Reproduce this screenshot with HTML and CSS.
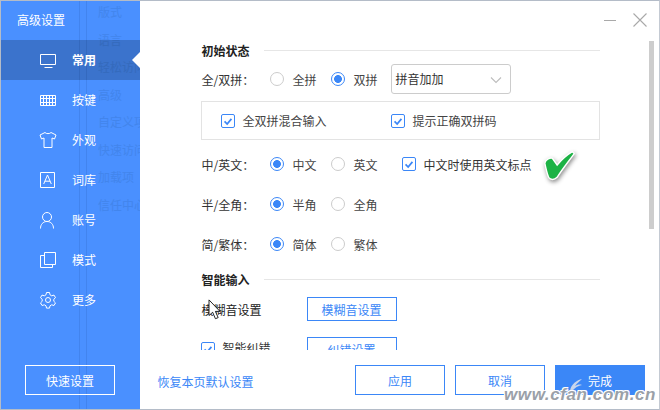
FILE: index.html
```html
<!DOCTYPE html>
<html lang="zh-CN">
<head>
<meta charset="utf-8">
<title>高级设置</title>
<link rel="stylesheet" href="styles.css">
</head>
<body>
<div class="window">
  <aside class="sidebar">
    <div class="ghost">
      <i class="ghost-line l1"></i><i class="ghost-line l2"></i>
      <span>版式</span><span>语言</span><span>轻松访问</span><span>高级</span><span>自定义项</span><span>快速访问</span><span>加载项</span><span>信任中心</span>
    </div>
    <div class="side-title">高级设置</div>
    <nav class="nav">
      <div class="nav-item active">
        <svg class="ico" viewBox="0 0 18 18"><path d="M1.500 3.500h15v10h-15zM5.500 16.500h8"/></svg><b>常用</b>
      </div>
      <div class="nav-item">
        <svg class="ico" viewBox="0 0 18 18"><path d="M1.500 4.500h15v10h-15zM1.500 7.500h15M1.500 11.500h15M4.500 4.500v10M7.500 4.500v10M10.500 4.500v10M13.500 4.500v10"/></svg><span>按键</span>
      </div>
      <div class="nav-item">
        <svg class="ico" viewBox="0 0 18 18"><path d="M6 1.500c1 1.500 5 1.500 6 0l5 2.500-1.500 4-2.500-1v9.500h-8v-9.500l-2.500 1-1.500-4z"/></svg><span>外观</span>
      </div>
      <div class="nav-item">
        <svg class="ico" viewBox="0 0 18 18"><path d="M1.500 1.500h14v15h-14zM4.700 13l3.800-9 3.800 9M5.900 10.200h5.200"/></svg><span>词库</span>
      </div>
      <div class="nav-item">
        <svg class="ico" viewBox="0 0 18 18"><circle cx="8" cy="6" r="4.500"/><path d="M1.500 17.500c0-4 2.500-7 6.500-7s6.500 3 6.500 7"/></svg><span>账号</span>
      </div>
      <div class="nav-item">
        <svg class="ico" viewBox="0 0 18 18"><path d="M5.500 1.500h11v12h-11zM5.500 4.500h-4v12h12v-3"/></svg><span>模式</span>
      </div>
      <div class="nav-item">
        <svg class="ico" viewBox="0 0 18 18"><circle cx="9" cy="9" r="2.500"/><path d="M7.500 1.500h3l.5 2.300 1.700 1 2.300-.7 1.500 2.600-1.700 1.600v2l1.700 1.600-1.500 2.600-2.300-.7-1.700 1-.5 2.300h-3l-.5-2.300-1.700-1-2.300.7-1.500-2.600 1.700-1.600v-2l-1.700-1.600 1.500-2.600 2.300.7 1.700-1z"/></svg><span>更多</span>
      </div>
    </nav>
    <button class="quick">快速设置</button>
  </aside>

  <main class="main">
    <div class="win-ctrl">
      <svg class="ctrl-ico" viewBox="0 0 50 16"><path d="M0 7.500h12M29.500 .5l13 13M42.500 .5l-13 13"/></svg>
    </div>
    <div class="content">
      <div class="scroll">
        <section class="sec-head first"><strong>初始状态</strong><i></i></section>

        <div class="row r-first">
          <label class="lab">全/双拼：</label>
          <span class="radio"></span><span class="opt">全拼</span>
          <span class="radio on"></span><span class="opt">双拼</span>
          <div class="select">拼音加加<svg class="chev" viewBox="0 0 12 8"><path d="M1 1.500l5 5 5-5"/></svg></div>
        </div>

        <div class="box">
          <span class="check"><svg viewBox="0 0 14 14"><path d="M3 7.500l3 3 5-6"/></svg></span><span class="box-a">全双拼混合输入</span>
          <span class="check"><svg viewBox="0 0 14 14"><path d="M3 7.500l3 3 5-6"/></svg></span><span>提示正确双拼码</span>
        </div>

        <div class="row r-cn">
          <label class="lab">中/英文：</label>
          <span class="radio on"></span><span class="opt">中文</span>
          <span class="radio"></span><span class="opt">英文</span>
          <span class="check c-punct"><svg viewBox="0 0 14 14"><path d="M3 7.500l3 3 5-6"/></svg></span><span>中文时使用英文标点</span>
        </div>
        <div class="row r-next">
          <label class="lab">半/全角：</label>
          <span class="radio on"></span><span class="opt">半角</span>
          <span class="radio"></span><span class="opt">全角</span>
        </div>
        <div class="row r-next">
          <label class="lab">简/繁体：</label>
          <span class="radio on"></span><span class="opt">简体</span>
          <span class="radio"></span><span class="opt">繁体</span>
        </div>

        <section class="sec-head second"><strong>智能输入</strong><i></i></section>

        <div class="row r-fuzzy">
          <span class="plain">模糊音设置</span><button class="ghost-btn">模糊音设置</button>
        </div>
        <div class="row r-smart">
          <span class="check c-smart"><svg viewBox="0 0 14 14"><path d="M3 7.500l3 3 5-6"/></svg></span><span class="smart-t">智能纠错</span><button class="ghost-btn">纠错设置</button>
        </div>
      </div>
      <div class="scrollbar"><i></i></div>
    </div>
    <footer class="foot">
      <a class="reset">恢复本页默认设置</a>
      <div class="foot-btns">
        <button class="btn">应用</button>
        <button class="btn">取消</button>
        <button class="btn primary">完成</button>
      </div>
    </footer>
  </main>

  <svg class="tick" viewBox="0 0 40 34"><path d="M4 15C5 11 10 9 12 10L17 17C22 11 28 6 33 3L35 5C30 12 22 22 17 30C14 33 10 33 8 30C6 25 5 20 4 15z"/></svg>
  <svg class="cursor" viewBox="0 0 14 24"><path d="M1 1v17l4-3.500 3 7 3-1.200-3-6.800h5z"/></svg>
  <svg class="leaf" viewBox="0 0 14 18"><path d="M13 1C8 2 2 6 1 13l1 4C3 11 8 8 13 7c-3-1-5 0-7 1 2-3 5-5 7-7z"/></svg>
  <div class="mark">www.cfan.com.cn</div>
</div>
</body>
</html>
```

FILE: styles.css
```css
* { box-sizing: border-box; }
html, body { margin: 0; padding: 0; }
body {
  width: 660px;
  height: 410px;
  overflow: hidden;
  background: #fff;
  font-family: "Noto Sans CJK SC", "Liberation Sans", sans-serif;
  font-size: 12px;
  color: #333;
}
button { font: inherit; cursor: pointer; padding: 0; }

.window {
  position: relative;
  width: 660px;
  height: 410px;
  display: flex;
  border: 1px solid #b4bcc8;
  border-right-color: #c4cad3;
  overflow: hidden;
}

/* Sidebar */
.sidebar {
  position: relative;
  width: 138.500px;
  flex: none;
  display: flex;
  flex-direction: column;
  background: #4a90ff;
  color: #fff;
  overflow: hidden;
}
.ghost {
  position: absolute;
  inset: 0;
  padding: 1px 0 0 97px;
  display: flex;
  flex-direction: column;
  color: #4285ec;
  font-size: 12px;
  white-space: nowrap;
}
.ghost span { height: 27.500px; line-height: 20px; flex: none; }
.ghost-line { position: absolute; top: 0; bottom: 0; width: 1px; background: #4284ee; }
.l1 { left: 78px; }
.l2 { left: 85px; }

.side-title {
  position: relative;
  height: 39px;
  padding: 9px 0 0 16px;
  line-height: 20px;
}
.nav { position: relative; display: flex; flex-direction: column; flex: 1; }
.nav-item {
  position: relative;
  height: 40px;
  display: flex;
  align-items: center;
  padding-left: 38px;
  line-height: 40px;
}
.nav-item > span, .nav-item > b { margin-left: 15px; font-weight: 400; }
.nav-item > b { font-weight: 700; }
.nav-item.active { background: rgba(0, 0, 0, .2); }
.nav-item.active::after {
  content: "";
  position: absolute;
  right: 0;
  top: 12px;
  border: 8px solid transparent;
  border-left: 0;
  border-right-color: #fff;
}
.ico {
  width: 18px;
  height: 18px;
  fill: none;
  stroke: #fff;
  stroke-width: 1;
  flex: none;
}
.quick {
  position: relative;
  width: 90px;
  height: 30px;
  margin: 0 0 14px 24px;
  background: transparent;
  border: 1px solid #fff;
  color: #fff;
}

/* Main */
.main {
  flex: 1;
  min-width: 0;
  display: flex;
  flex-direction: column;
}
.win-ctrl {
  height: 39px;
  flex: none;
  display: flex;
  justify-content: flex-end;
  align-items: flex-start;
  padding: 12px 5px 0 0;
}
.ctrl-ico { width: 50px; height: 16px; fill: none; stroke: #a9a9a9; stroke-width: 1.100; }

.content { flex: 1; min-height: 0; display: flex; overflow: hidden; }
.scroll {
  width: 509.500px;
  padding: 0 49.500px 0 62px;
  flex: none;
  overflow: hidden;
}
.scrollbar { flex: 1; padding-top: 1px; }
.scrollbar i { display: block; width: 5px; height: 188px; background: #cdcdcd; }

.sec-head { display: flex; align-items: center; height: 20px; }
.sec-head strong { font-weight: 700; color: #222; width: 62px; flex: none; font-size: 12px; }
.sec-head i { flex: 1; height: 1px; background: #e6e6e6; }
.second { margin-top: 10px; }

.row { display: flex; align-items: center; height: 30px; }
.r-first { margin-top: 4px; }
.r-cn { margin-top: 9px; }
.r-next { margin-top: 10px; }
.r-fuzzy { margin-top: 8px; height: 24px; }
.r-smart { margin-top: 16px; height: 24px; align-items: flex-start; }
.lab { width: 68px; flex: none; color: #333; }
.radio {
  width: 14px;
  height: 14px;
  border-radius: 50%;
  border: 1px solid #ccc;
  flex: none;
  background: #fff;
}
.radio.on {
  border-color: #3b87f7;
  background: radial-gradient(circle, #3b87f7 0 3.600px, #fff 4.200px);
}
.opt { width: 38px; flex: none; margin-left: 9px; color: #444; }

.select {
  position: relative;
  width: 120px;
  height: 30px;
  margin-left: -1px;
  padding-left: 4px;
  line-height: 28px;
  border: 1px solid #ccc;
  border-radius: 3px;
  color: #333;
}
.chev {
  position: absolute;
  right: 8px;
  top: 11px;
  width: 12px;
  height: 8px;
  fill: none;
  stroke: #bdbdbd;
  stroke-width: 1.100;
}
.box {
  display: flex;
  align-items: center;
  height: 39px;
  width: 399px;
  margin: 7px 0 0 -1px;
  padding-left: 19px;
  border: 1px solid #e3e3e3;
  color: #444;
}
.box .check { margin-right: 8px; }
.box-a { width: 148px; flex: none; }

.check {
  width: 14px;
  height: 14px;
  flex: none;
  border: 1px solid #3b87f7;
  border-radius: 2px;
  background: #fff;
  display: flex;
}
.check svg { width: 12px; height: 12px; fill: none; stroke: #3b87f7; stroke-width: 2; }
.c-punct { margin-right: 8px; margin-left: 10px; }

.plain { width: 105px; flex: none; color: #222; }
.ghost-btn {
  width: 90px;
  height: 24px;
  flex: none;
  background: #fff;
  border: 1px solid #3b87f7;
  color: #3b87f7;
}
.c-smart { margin: 5px 0 0 -1px; }
.smart-t { width: 92px; flex: none; padding-left: 8px; margin-top: 5px; line-height: 12px; }

.foot {
  flex: none;
  height: 59px;
  display: flex;
  justify-content: space-between;
  padding: 15px 14px 0 18px;
}
.reset { color: #3b87f7; line-height: 34px; height: 34px; }
.foot-btns { display: flex; gap: 10px; height: 30px; }
.btn {
  width: 90px;
  height: 30px;
  border: 1px solid #3b87f7;
  background: #fff;
  color: #3b87f7;
}
.btn.primary { background: #3b87f7; color: #fff; }

/* Overlays */
.tick {
  position: absolute;
  left: 540px;
  top: 147px;
  width: 38px;
  height: 34px;
  fill: #1cb245;
  stroke: #fff;
  stroke-width: 1.500;
  filter: drop-shadow(1px 2px 2px rgba(0, 0, 0, .45));
}
.cursor {
  position: absolute;
  left: 207px;
  top: 298px;
  width: 13px;
  height: 22px;
  fill: #fff;
  stroke: #111;
  stroke-width: 1;
}
.leaf {
  position: absolute;
  left: 568px;
  top: 377px;
  width: 14px;
  height: 18px;
  fill: #c9d6ec;
}
.mark {
  position: absolute;
  right: 3px;
  bottom: 4px;
  font: italic 700 17px "Liberation Sans", sans-serif;
  letter-spacing: .6px;
  color: #9aa0a8;
  text-shadow: 1px 1px 0 #fff, -1px -1px 0 #fff, 1px -1px 0 #fff, -1px 1px 0 #fff;
}
```
